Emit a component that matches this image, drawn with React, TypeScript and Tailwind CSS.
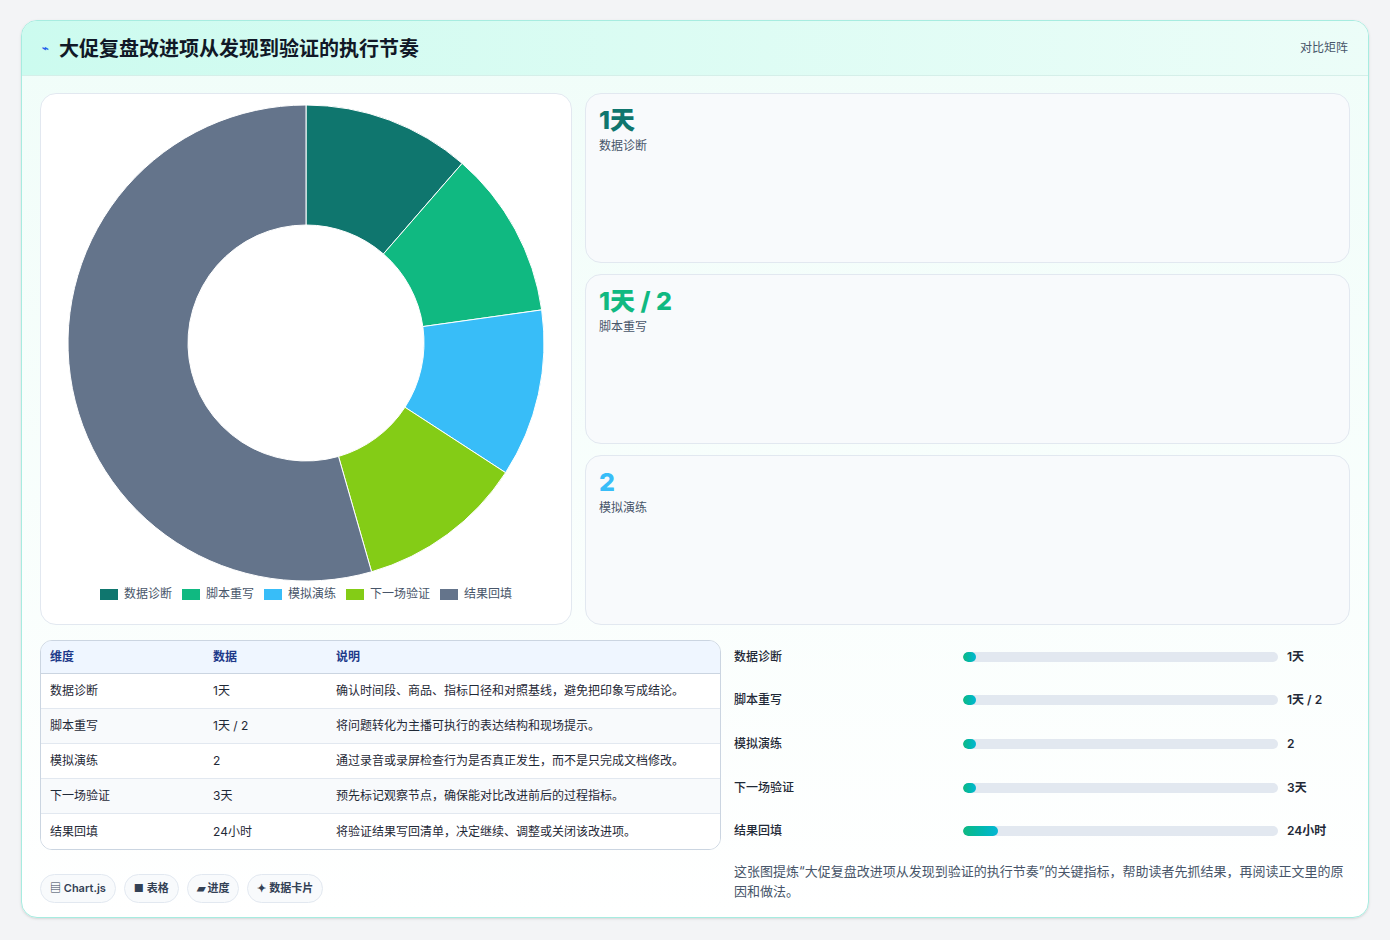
import React from "react";

const segs = [
  { label: "数据诊断", color: "#0f766e", v: 1 },
  { label: "脚本重写", color: "#10b981", v: 1 },
  { label: "模拟演练", color: "#38bdf8", v: 1 },
  { label: "下一场验证", color: "#84cc16", v: 1 },
  { label: "结果回填", color: "#64748b", v: 4.78 },
];

function Donut() {
  const total = segs.reduce((a, s) => a + s.v, 0);
  const cx = 240, cy = 240, R = 238, r = 118;
  let a0 = 0;
  const pt = (a: number, rad: number) => [cx + rad * Math.sin(a), cy - rad * Math.cos(a)];
  return (
    <svg width="480" height="480" viewBox="0 0 480 480">
      {segs.map((s) => {
        const a1 = a0 + (s.v / total) * Math.PI * 2;
        const large = a1 - a0 > Math.PI ? 1 : 0;
        const [x0, y0] = pt(a0, R), [x1, y1] = pt(a1, R), [x2, y2] = pt(a1, r), [x3, y3] = pt(a0, r);
        const d = `M${x0},${y0} A${R},${R} 0 ${large} 1 ${x1},${y1} L${x2},${y2} A${r},${r} 0 ${large} 0 ${x3},${y3} Z`;
        a0 = a1;
        return <path key={s.label} d={d} fill={s.color} stroke="#fff" strokeWidth="1" />;
      })}
    </svg>
  );
}

const rows = [
  ["数据诊断", "1天", "确认时间段、商品、指标口径和对照基线，避免把印象写成结论。"],
  ["脚本重写", "1天 / 2", "将问题转化为主播可执行的表达结构和现场提示。"],
  ["模拟演练", "2", "通过录音或录屏检查行为是否真正发生，而不是只完成文档修改。"],
  ["下一场验证", "3天", "预先标记观察节点，确保能对比改进前后的过程指标。"],
  ["结果回填", "24小时", "将验证结果写回清单，决定继续、调整或关闭该改进项。"],
];

const cards = [
  { v: "1天", l: "数据诊断", c: "text-[#0f766e]" },
  { v: "1天 / 2", l: "脚本重写", c: "text-[#10b981]" },
  { v: "2", l: "模拟演练", c: "text-[#38bdf8]" },
];

export default function App() {
  return (
    <div className="min-h-[940px] bg-[#f3f4f6] pt-5 px-[21px]" style={{ fontFamily: "Inter, 'Noto Sans CJK SC', sans-serif" }}>
      <div className="w-[1348px] h-[898px] rounded-2xl border border-[#a7ece0] bg-gradient-to-b from-[#f0fdf9] to-white overflow-hidden shadow-sm">
        <div className="h-[55px] flex items-center justify-between px-5 bg-gradient-to-r from-[#ccfbef] to-[#ecfdf8] border-b border-[#d5efe9]">
          <div className="flex items-center gap-[10px]">
            <span className="text-[#2563eb] text-[11px] font-bold">⌁</span>
            <span className="text-[20px] font-bold text-[#111827] mt-[2px]">大促复盘改进项从发现到验证的执行节奏</span>
          </div>
          <span className="text-[12px] text-[#475569]">对比矩阵</span>
        </div>
        <div className="px-[18px] pt-[17px]">
          <div className="flex gap-[13px]">
            <div className="w-[532px] h-[532px] rounded-2xl border border-[#e2e8f0] bg-white flex flex-col items-center pt-[9px]">
              <Donut />
              <div className="flex gap-[10px] mt-[2px] text-[12px] text-[#475569]">
                {segs.map((s) => (
                  <div key={s.label} className="flex items-center gap-[6px]">
                    <span className="w-[18px] h-[11px]" style={{ background: s.color }} />
                    {s.label}
                  </div>
                ))}
              </div>
            </div>
            <div className="flex-1 flex flex-col gap-[11px]">
              {cards.map((c) => (
                <div key={c.l} className="h-[170px] rounded-2xl border border-[#e2e8f0] bg-[#f8fafc] px-[13px] pt-[9px]">
                  <div className={`text-[25px] font-extrabold leading-[34px] ${c.c}`}>{c.v}</div>
                  <div className="text-[12px] text-[#475569]">{c.l}</div>
                </div>
              ))}
            </div>
          </div>
          <div className="flex gap-[13px] mt-[15px]">
            <div className="w-[681px]">
              <div className="rounded-xl border border-[#cbd5e1] overflow-hidden text-[12px] text-[#1f2937]">
                <div className="flex h-[33px] items-center bg-[#eff6ff] text-[#1e3a8a] font-semibold border-b border-[#cbd5e1]">
                  <div className="w-[172px] pl-[9px]">维度</div>
                  <div className="w-[123px]">数据</div>
                  <div>说明</div>
                </div>
                {rows.map((r, i) => (
                  <div key={i} className={`flex h-[35px] items-center ${i % 2 ? "bg-[#f8fafc]" : "bg-white"} ${i < 4 ? "border-b border-[#e2e8f0]" : ""}`}>
                    <div className="w-[172px] pl-[9px]">{r[0]}</div>
                    <div className="w-[123px]">{r[1]}</div>
                    <div>{r[2]}</div>
                  </div>
                ))}
              </div>
              <div className="flex gap-[8px] mt-[24px] text-[11px] font-semibold text-[#334155]">
                {["▤ Chart.js", "■ 表格", "▰ 进度", "✦ 数据卡片"].map((t) => (
                  <span key={t} className="h-[29px] px-[9px] flex items-center rounded-full border border-[#e2e8f0] bg-[#f8fafc]">{t}</span>
                ))}
              </div>
            </div>
            <div className="flex-1 -mt-[5px]">
              {[
                ["数据诊断", "1天", 4], ["脚本重写", "1天 / 2", 4], ["模拟演练", "2", 4], ["下一场验证", "3天", 4], ["结果回填", "24小时", 11],
              ].map(([l, v, p]) => (
                <div key={l as string} className="h-[43.6px] flex items-center text-[12px] text-[#1f2937] font-medium">
                  <div className="w-[229px]">{l}</div>
                  <div className="w-[315px] h-[10px] rounded-full bg-[#e2e8f0] overflow-hidden">
                    <div className="h-full rounded-full bg-gradient-to-r from-[#10b981] to-[#06b6d4] min-w-[12px]" style={{ width: `${p}%` }} />
                  </div>
                  <div className="ml-[9px] font-semibold">{v}</div>
                </div>
              ))}
              <p className="mt-[8px] text-[13px] leading-[20px] text-[#475569]">这张图提炼“大促复盘改进项从发现到验证的执行节奏”的关键指标，帮助读者先抓结果，再阅读正文里的原因和做法。</p>
            </div>
          </div>
        </div>
      </div>
    </div>
  );
}
